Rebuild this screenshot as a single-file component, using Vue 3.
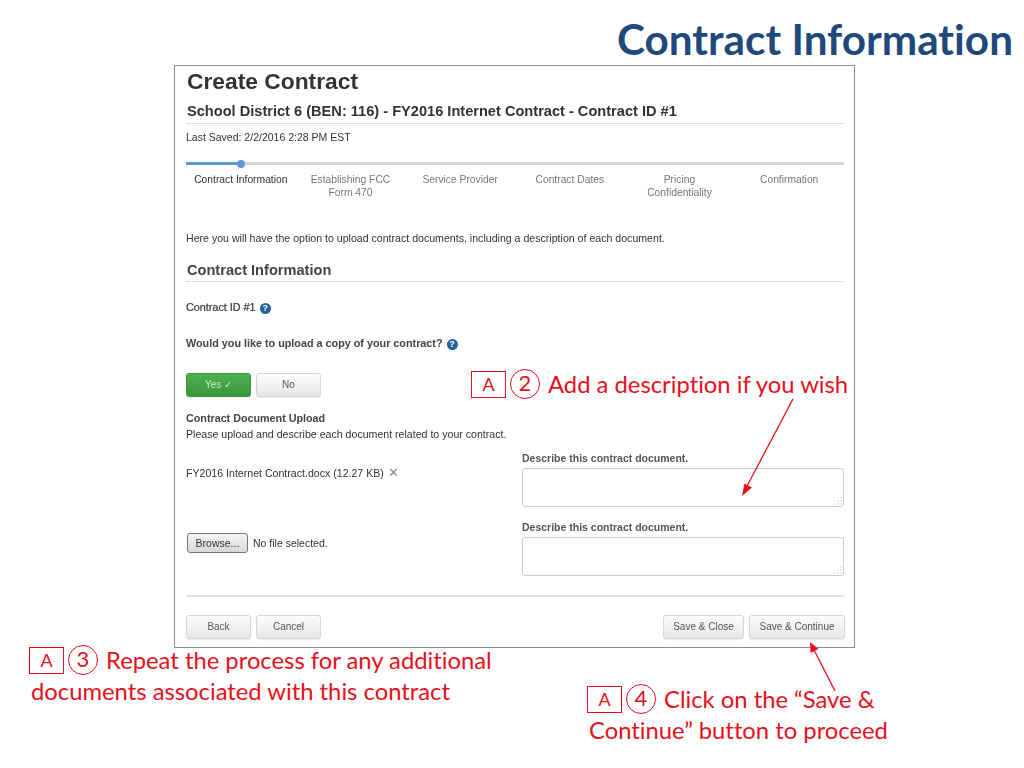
<script setup>
const steps = [
  { label: 'Contract Information', active: true },
  { label: 'Establishing FCC Form 470' },
  { label: 'Service Provider' },
  { label: 'Contract Dates' },
  { label: 'Pricing Confidentiality' },
  { label: 'Confirmation' }
]
</script>

<template>
  <div class="slide">
    <h1 class="slide-title">Contract Information</h1>

    <main class="panel">
      <h2 class="page-title">Create Contract</h2>
      <h3 class="sub-title">School District 6 (BEN: 116) - FY2016 Internet Contract - Contract ID #1</h3>
      <p class="saved">Last Saved: 2/2/2016 2:28 PM EST</p>

      <div class="track"><div class="track-fill"></div><div class="track-dot"></div></div>
      <ol class="steps">
        <li v-for="s in steps" :key="s.label" class="step" :class="{ active: s.active }">{{ s.label }}</li>
      </ol>

      <p class="intro">Here you will have the option to upload contract documents, including a description of each document.</p>

      <h3 class="section-title">Contract Information</h3>

      <p class="field-id">Contract ID #1 <span class="help">?</span></p>
      <p class="question">Would you like to upload a copy of your contract? <span class="help">?</span></p>

      <div class="choice">
        <button class="btn btn-yes">Yes ✓</button>
        <button class="btn">No</button>
      </div>

      <p class="upload-title">Contract Document Upload</p>
      <p class="upload-desc">Please upload and describe each document related to your contract.</p>

      <div class="doc-row doc-first">
        <div class="doc-file">FY2016 Internet Contract.docx (12.27 KB) <span class="remove">✕</span></div>
        <div class="doc-desc">
          <label class="doc-label">Describe this contract document.</label>
          <div class="area"><svg class="grip" width="8" height="8" viewBox="0 0 8 8"><path d="M7 1v0M7 4v0M4 4v0M7 7v0M4 7v0M1 7v0" stroke="#aaa" stroke-width="1" stroke-linecap="square"/></svg></div>
        </div>
      </div>

      <div class="doc-row doc-second">
        <div class="doc-browse"><span class="browse">Browse...</span><span>No file selected.</span></div>
        <div class="doc-desc">
          <label class="doc-label">Describe this contract document.</label>
          <div class="area"><svg class="grip" width="8" height="8" viewBox="0 0 8 8"><path d="M7 1v0M7 4v0M4 4v0M7 7v0M4 7v0M1 7v0" stroke="#aaa" stroke-width="1" stroke-linecap="square"/></svg></div>
        </div>
      </div>

      <div class="actions">
        <div class="action-group">
          <button class="btn">Back</button>
          <button class="btn">Cancel</button>
        </div>
        <div class="action-group">
          <button class="btn btn-close">Save &amp; Close</button>
          <button class="btn btn-continue">Save &amp; Continue</button>
        </div>
      </div>
    </main>

    <div class="note note-a">
      <span class="tag">A</span><span class="num">2</span><span class="note-text">Add a description if you wish</span>
    </div>

    <div class="note note-b">
      <div class="note-line"><span class="tag">A</span><span class="num">3</span><span class="note-text">Repeat the process for any additional</span></div>
      <div class="note-text note-cont">documents associated with this contract</div>
    </div>

    <div class="note note-c">
      <div class="note-line"><span class="tag">A</span><span class="num">4</span><span class="note-text">Click on the “Save &amp;</span></div>
      <div class="note-text note-cont">Continue” button to proceed</div>
    </div>

    <svg class="arrows" width="1024" height="768" viewBox="0 0 1024 768">
      <path d="M793 399L746 488" stroke="#e8101c" stroke-width="1.3" fill="none"/>
      <path d="M742 496L744.5 483.5L752 487.5Z" fill="#e8101c"/>
      <path d="M835 691L814 650" stroke="#e8101c" stroke-width="1.3" fill="none"/>
      <path d="M810 642L818.5 649L810.5 653Z" fill="#e8101c"/>
    </svg>
  </div>
</template>

<style scoped>
.slide {
  position: relative;
  width: 1024px;
  height: 768px;
  overflow: hidden;
  background: #fff;
  font-family: "Liberation Sans", Arial, sans-serif;
  font-variant-ligatures: none;
}
.slide-title {
  margin: 0;
  padding: 14px 11px 0 0;
  height: 51px;
  box-sizing: content-box;
  text-align: right;
  font-family: Lato, "Open Sans", sans-serif;
  font-size: 42.3px;
  line-height: 50px;
  font-weight: 700;
  color: #1f497d;
}
.panel {
  box-sizing: border-box;
  width: 681px;
  height: 583px;
  margin: 0 0 0 174px;
  padding: 0 10px 0 11px;
  border: 1px solid #8c8c8c;
  filter: blur(0.3px);
}
p, h2, h3 { margin: 0; }
.page-title {
  margin-top: 2px;
  padding-left: 1px;
  font-size: 22.8px;
  line-height: 26px;
  font-weight: 700;
  color: #333;
}
.sub-title {
  margin-top: 8px;
  padding: 0 0 2px 1px;
  height: 19px;
  font-size: 14.6px;
  line-height: 19px;
  font-weight: 700;
  color: #333;
  border-bottom: 1px solid #ddd;
  box-sizing: content-box;
}
.saved {
  margin-top: 6px;
  font-size: 10.5px;
  line-height: 14px;
  color: #333;
}
.track {
  position: relative;
  margin-top: 18px;
  height: 3px;
  background: #d6d6d6;
}
.track-fill {
  width: 55px;
  height: 3px;
  background: #5b9bd5;
}
.track-dot {
  position: absolute;
  left: 51px;
  top: -2.5px;
  width: 8px;
  height: 8px;
  border-radius: 50%;
  background: #5b9bd5;
}
.steps {
  display: grid;
  grid-template-columns: repeat(6, 1fr);
  margin: 8px 0 0;
  padding: 0;
  list-style: none;
  height: 26px;
}
.step {
  padding: 0 14px;
  text-align: center;
  font-size: 10.3px;
  line-height: 13px;
  color: #777;
}
.step.active {
  padding: 0;
  color: #333;
}
.intro {
  margin-top: 32px;
  font-size: 10.6px;
  line-height: 14px;
  color: #333;
}
.section-title {
  margin-top: 16px;
  padding: 0 0 2px 1px;
  font-size: 14.6px;
  line-height: 18px;
  font-weight: 700;
  color: #444;
  border-bottom: 1px solid #ddd;
}
.field-id {
  margin-top: 18px;
  font-size: 10.8px;
  line-height: 14px;
  color: #333;
  -webkit-text-stroke: 0.2px #333;
}
.question {
  margin-top: 22px;
  font-size: 10.8px;
  line-height: 14px;
  font-weight: 700;
  color: #444;
}
.help {
  display: inline-block;
  width: 11px;
  height: 11px;
  margin-left: 1px;
  vertical-align: 0.5px;
  border-radius: 50%;
  background: #23639f;
  color: #fff;
  text-align: center;
  font-size: 9px;
  line-height: 11px;
  font-weight: 700;
  -webkit-text-stroke: 0;
}
.choice {
  display: flex;
  gap: 5px;
  margin-top: 23px;
}
.btn {
  box-sizing: border-box;
  width: 65px;
  height: 24px;
  padding: 0 0 2px;
  border: 1px solid #d5d5d5;
  border-radius: 3px;
  background: linear-gradient(#fdfdfd, #e6e6e6);
  box-shadow: 0 1px 1px rgba(0, 0, 0, 0.08);
  font-family: inherit;
  font-size: 10px;
  color: #555;
}
.btn-yes {
  border-color: #3d9a3d;
  background: linear-gradient(#4fb04f, #39973c);
  color: #cfe9cf;
}
.upload-title {
  margin-top: 14px;
  font-size: 10.75px;
  line-height: 14px;
  font-weight: 700;
  color: #444;
}
.upload-desc {
  margin-top: 2px;
  font-size: 10.6px;
  line-height: 14px;
  color: #333;
}
.doc-row {
  display: grid;
  grid-template-columns: 336px 322px;
}
.doc-first { margin-top: 10px; }
.doc-second { margin-top: 13px; }
.doc-file {
  padding-top: 15px;
  font-size: 10.6px;
  line-height: 14px;
  color: #333;
}
.remove {
  margin-left: 1px;
  font-size: 13px;
  color: #888;
}
.doc-browse {
  display: flex;
  align-items: center;
  gap: 5px;
  padding: 13px 0 0 1px;
  height: 20px;
  box-sizing: content-box;
  font-size: 10.5px;
  color: #333;
}
.browse {
  box-sizing: border-box;
  width: 61px;
  height: 20px;
  border: 1px solid #777;
  border-radius: 3px;
  background: linear-gradient(#f4f4f4, #d8d8d8);
  text-align: center;
  line-height: 18px;
  color: #333;
}
.doc-label {
  display: block;
  font-size: 10.5px;
  line-height: 14px;
  font-weight: 700;
  color: #555;
}
.area {
  position: relative;
  box-sizing: border-box;
  height: 39px;
  margin-top: 3px;
  border: 1px solid #ccc;
  border-radius: 3px;
}
.grip {
  position: absolute;
  right: 1px;
  bottom: 1px;
}
.actions {
  display: flex;
  justify-content: space-between;
  margin-top: 19px;
  padding-top: 18px;
  border-top: 2px solid #e2e2e2;
}
.action-group {
  display: flex;
  gap: 5px;
}
.btn-close { width: 81px; }
.btn-continue { width: 96px; margin-right: -1px; }

.note {
  position: absolute;
  font-family: Lato, "Open Sans", sans-serif;
  color: #e8101c;
}
.note-a, .note-line {
  display: flex;
  align-items: center;
}
.note-a { left: 471px; top: 369px; }
.note-b { left: 29px; top: 645px; }
.note-c { left: 587px; top: 684px; }
.tag {
  box-sizing: border-box;
  width: 35px;
  height: 27px;
  border: 1.5px solid #e8101c;
  text-align: center;
  font-size: 18px;
  line-height: 25px;
}
.num {
  box-sizing: border-box;
  width: 30px;
  height: 30px;
  margin-left: 4px;
  border: 1.5px solid #e8101c;
  border-radius: 50%;
  text-align: center;
  font-size: 22px;
  line-height: 26px;
}
.note-text {
  margin-left: 8px;
  font-size: 23.8px;
  line-height: 30px;
  white-space: nowrap;
}
.note-cont {
  margin: 1px 0 0 2px;
}
.arrows {
  position: absolute;
  left: 0;
  top: 0;
  pointer-events: none;
}
</style>
